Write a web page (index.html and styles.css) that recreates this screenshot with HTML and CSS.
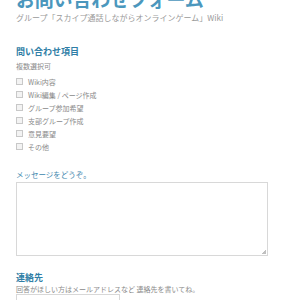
FILE: index.html
```html
<!DOCTYPE html>
<html lang="ja">
<head>
    <meta charset="UTF-8">
    <meta name="viewport" content="width=device-width, initial-scale=1.0">
    <title>お問い合わせフォーム</title>
    <link rel="stylesheet" href="styles.css">
</head>
<body>

    <div class="page">
        <h1 class="title">お問い合わせフォーム</h1>
        <p class="subtitle">グループ「スカイプ通話しながらオンラインゲーム」Wiki</p>

        <!-- 問い合わせ項目 -->
        <div class="field first">
            <h2>問い合わせ項目</h2>
            <p class="note">複数選択可</p>
            <ul class="checks">
                <li><label><span class="box"></span>Wiki内容</label></li>
                <li><label><span class="box"></span>Wiki編集 / ページ作成</label></li>
                <li><label><span class="box"></span>グループ参加希望</label></li>
                <li><label><span class="box"></span>支部グループ作成</label></li>
                <li><label><span class="box"></span>意見要望</label></li>
                <li><label><span class="box"></span>その他</label></li>
            </ul>
        </div>

        <div class="field">
            <h3>メッセージをどうぞ。</h3>
            <div class="textarea"><span class="grip"></span></div>
        </div>

        <div class="field contact">
            <h2>連絡先</h2>
            <p class="note tight">回答がほしい方はメールアドレスなど 連絡先を書いてね。</p>
            <div class="input"></div>
        </div>
    </div>

</body>
</html>
```

FILE: styles.css
```css
body {
    margin: 0;
    background-color: #fff;
    font-family: "Noto Sans CJK JP", "Noto Sans", sans-serif;
    color: #8a8a8a;
    overflow: hidden;
}
.page {
    padding: 0 32px 0 16px;
}
.title {
    font-size: 19px;
    line-height: 20px;
    font-weight: 700;
    color: #4b97bd;
    margin: -11px 0 0;
    letter-spacing: -0.2px;
}
.subtitle {
    font-size: 8px;
    line-height: 10px;
    margin: 4px 0 0;
    color: #9a9a9a;
}
.field {
    margin-top: 17px;
}
.field.first {
    margin-top: 23px;
}
.field h2 {
    font-size: 9px;
    line-height: 12px;
    font-weight: 700;
    color: #2f7ea6;
    margin: 0;
}
.field.contact {
    margin-top: 16px;
}
.field h3 {
    font-size: 7.5px;
    line-height: 10px;
    font-weight: 400;
    color: #3d86ad;
    margin: 0 0 2px;
}
.note {
    font-size: 7px;
    line-height: 10px;
    margin: 3px 0 0;
}
.note.tight {
    margin-top: 0;
}
.checks {
    list-style: none;
    margin: 4px 0 0;
    padding: 0;
}
.checks li {
    height: 13px;
    display: flex;
    align-items: center;
}
.checks label {
    display: flex;
    align-items: center;
    font-size: 7px;
    color: #8a8a8a;
}
.box {
    width: 5px;
    height: 5px;
    border: 1px solid #c8c8c8;
    background-color: #f3f3f3;
    margin-right: 5px;
}
.textarea {
    position: relative;
    height: 72px;
    border: 1px solid #d8d8d8;
    background-color: #fff;
}
.grip {
    position: absolute;
    right: 1px;
    bottom: 1px;
    width: 4px;
    height: 4px;
    background: linear-gradient(135deg, transparent 50%, #c0c0c0 50%);
}
.input {
    width: 102px;
    height: 16px;
    border: 1px solid #d8d8d8;
    margin-top: 0;
}
```
